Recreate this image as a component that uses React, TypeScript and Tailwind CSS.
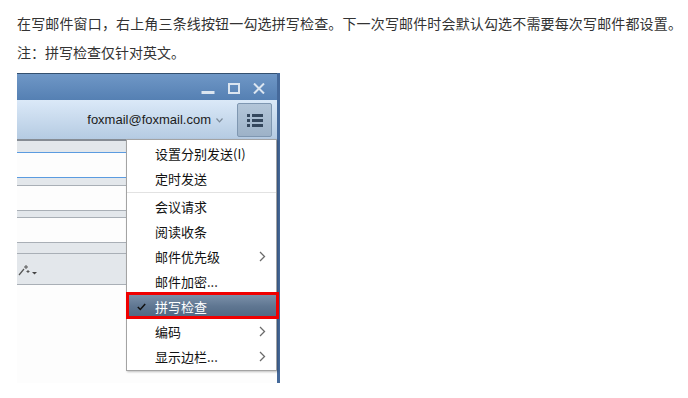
import React from "react";

const CJK = '"Noto Sans CJK SC", "Noto Sans", sans-serif';

function Chevron() {
  return (
    <svg width="7" height="11" viewBox="0 0 7 11" className="block">
      <path d="M1 1 L5.5 5.5 L1 10" fill="none" stroke="#6b6b6b" strokeWidth="1.3" />
    </svg>
  );
}

function MenuItem({ label, arrow }: { label: string; arrow?: boolean }) {
  return (
    <div className="h-[25px] flex items-center pl-[28px] pr-[10px] text-[13px] text-[#111]">
      <span className="flex-1">{label}</span>
      {arrow && <Chevron />}
    </div>
  );
}

export default function App() {
  return (
    <div
      className="w-[688px] h-[398px] bg-white overflow-hidden pl-[17px] pt-[11px]"
      style={{ fontFamily: CJK }}
    >
      <p className="text-[14px] leading-[24px] tracking-[0.15px] text-[#333] whitespace-nowrap">
        在写邮件窗口，右上角三条线按钮一勾选拼写检查。下一次写邮件时会默认勾选不需要每次写邮件都设置。
      </p>
      <p className="mt-[5px] text-[14px] leading-[24px] text-[#333]">注：拼写检查仅针对英文。</p>

      <div className="mt-[9px] relative w-[263px] h-[310px] flex flex-col border-r-[3px] border-[#45699a]">
        {/* title bar */}
        <div className="h-[27px] border-t border-[#34506f] bg-gradient-to-b from-[#6f97c6] to-[#5580b3] flex items-start justify-end pr-[12px] pt-[9px] gap-[13px]">
          <svg width="14" height="12" viewBox="0 0 14 12" className="block">
            <rect x="0.5" y="8" width="13" height="3" fill="#dbe5f0" />
          </svg>
          <svg width="12" height="11" viewBox="0 0 12 11" className="block">
            <rect x="1" y="1" width="10" height="9" fill="none" stroke="#dbe5f0" strokeWidth="2" />
          </svg>
          <svg width="12" height="11" viewBox="0 0 12 11" className="block">
            <path d="M1 0.5 L11 10.5 M11 0.5 L1 10.5" stroke="#dbe5f0" strokeWidth="2" />
          </svg>
        </div>

        {/* toolbar */}
        <div className="h-[39px] bg-gradient-to-b from-[#dbe9f8] to-[#b5cbe2] flex items-center justify-end pr-[5px]">
          <span
            className="text-[13px] text-[#1b1b1b] mr-[5px]"
            style={{ fontFamily: '"Liberation Sans", Arial, sans-serif' }}
          >
            foxmail@foxmail.com
          </span>
          <svg width="7" height="5" viewBox="0 0 7 5" className="block mr-[14px] mt-[2px]">
            <path d="M0.5 0.5 L3.5 3.8 L6.5 0.5" fill="none" stroke="#7c8a99" strokeWidth="1.2" />
          </svg>
          <div className="w-[35px] h-[34px] rounded-[2px] border border-[#7f97b1] bg-gradient-to-b from-[#b3c5d8] to-[#9db2c8] flex items-center justify-center">
            <svg width="16" height="14" viewBox="0 0 16 14" className="block">
              <rect x="0" y="1" width="3" height="3" fill="#34475d" />
              <rect x="5" y="1" width="11" height="3" fill="#34475d" />
              <rect x="0" y="6" width="3" height="3" fill="#34475d" />
              <rect x="5" y="6" width="11" height="3" fill="#34475d" />
              <rect x="0" y="11" width="3" height="3" fill="#34475d" />
              <rect x="5" y="11" width="11" height="3" fill="#34475d" />
            </svg>
          </div>
        </div>

        {/* compose area */}
        <div className="h-[2px] bg-[#868c94]" />
        <div className="h-[11px] bg-[#e3e7eb]" />
        <div className="h-px bg-[#5b9be0]" />
        <div className="h-[24px] bg-[#fdfdfd]" />
        <div className="h-px bg-[#5b9be0]" />
        <div className="h-[7px] bg-[#e3e7eb]" />
        <div className="h-px bg-[#a9afb6]" />
        <div className="h-[24px] bg-[#fdfdfd]" />
        <div className="h-px bg-[#a9afb6]" />
        <div className="h-[6px] bg-[#e3e7eb]" />
        <div className="h-px bg-[#a9afb6]" />
        <div className="h-[24px] bg-[#fdfdfd]" />
        <div className="h-px bg-[#a9afb6]" />
        <div className="h-[10px] bg-[#e3e7eb]" />
        <div className="h-px bg-[#a9afb6]" />
        <div className="h-[30px] bg-[#e3e7eb] flex items-center pl-[1px]">
          <svg width="20" height="12" viewBox="0 0 20 12" className="block mt-[1px]">
            <path d="M1 11 L6 5" stroke="#555" strokeWidth="1.2" />
            <path d="M8 1 V5 M6 3 H10" stroke="#555" strokeWidth="1" />
            <path d="M10 6 V9 M8.5 7.5 H11.5" stroke="#555" strokeWidth="1" />
            <path d="M14 8 H19 L16.5 10.5 Z" fill="#444" />
          </svg>
        </div>
        <div className="h-px bg-[#a9afb6]" />
        <div className="flex-1 bg-[#fdfdfd]" />

        {/* dropdown menu */}
        <div className="absolute left-[109px] top-[66px] w-[151px] h-[232px] bg-white border border-[#a3a3a3] shadow-[1px_1px_2px_rgba(0,0,0,0.25)] pt-px flex flex-col">
          <MenuItem label="设置分别发送(I)" />
          <MenuItem label="定时发送" />
          <div className="h-px my-px bg-[#e2e2e2]" />
          <MenuItem label="会议请求" />
          <MenuItem label="阅读收条" />
          <MenuItem label="邮件优先级" arrow />
          <MenuItem label="邮件加密..." />
          <div className="h-[25px] flex items-center pl-[10px] text-[13px] text-white bg-gradient-to-b from-[#7d92ab] via-[#5f7691] to-[#4d6580]">
            <svg width="9" height="8" viewBox="0 0 9 8" className="block mr-[9px]">
              <path d="M0.8 4 L3.3 6.5 L8.2 1" fill="none" stroke="#111" strokeWidth="1.5" />
            </svg>
            <span>拼写检查</span>
          </div>
          <MenuItem label="编码" arrow />
          <MenuItem label="显示边栏..." arrow />
        </div>

        {/* red annotation box */}
        <div className="absolute left-[109px] top-[219px] w-[153px] h-[27px] border-[3px] border-[#f00000]" />
      </div>
    </div>
  );
}
